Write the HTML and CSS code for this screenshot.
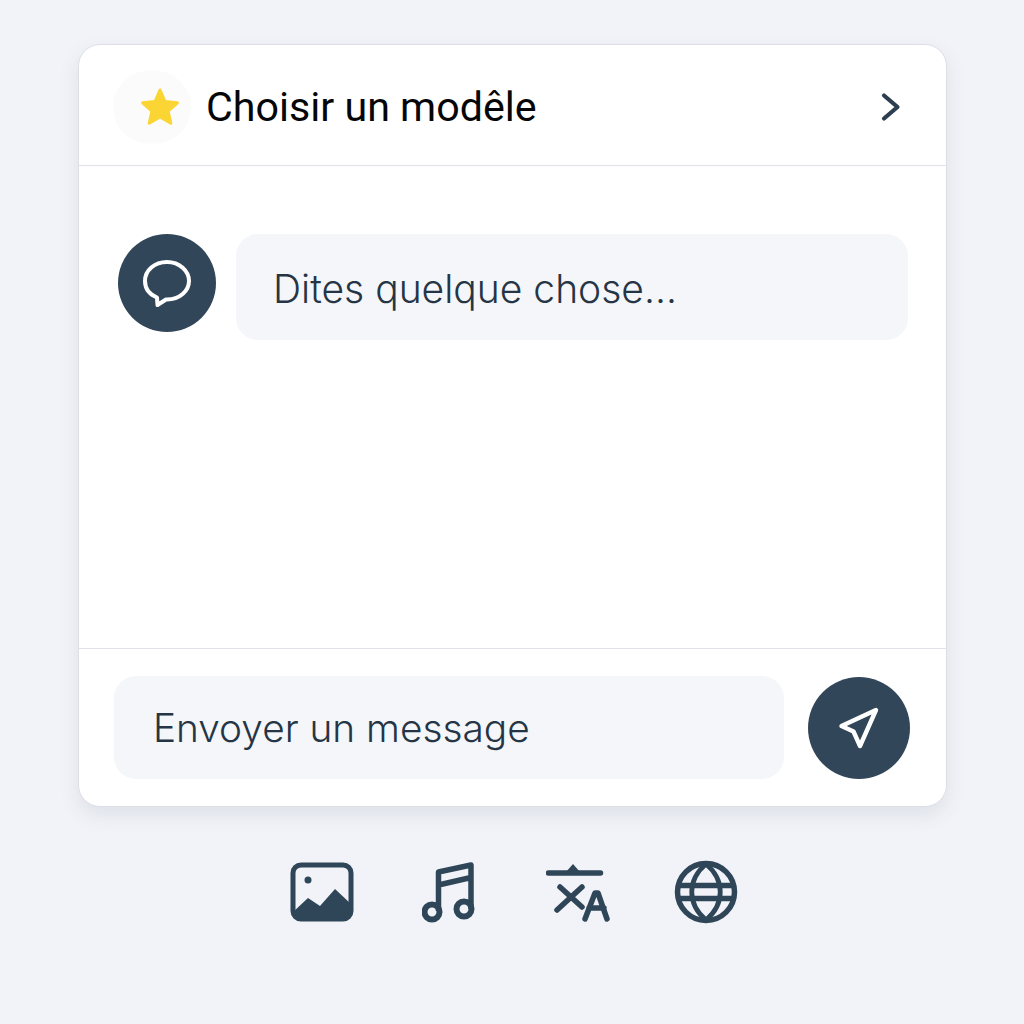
FILE: index.html
```html
<!DOCTYPE html>
<html lang="fr">
<head>
    <meta charset="UTF-8">
    <meta name="viewport" content="width=device-width, initial-scale=1.0">
    <title>Choisir un modèle</title>
    <link rel="stylesheet" href="styles.css">
</head>
<body>
    <div class="card">
        <div class="card-header">
            <div class="star-badge">
                <svg width="40" height="40" viewBox="0 0 40 40"><path d="M20 3l5 11.500 12.400 1.300-9.300 8.300 2.700 12.200L20 29.900 9.200 36.300l2.700-12.200-9.300-8.300L15 14.500z" fill="#fbd533" stroke="#fbd533" stroke-width="3" stroke-linejoin="round"/></svg>
            </div>
            <span class="model-title">Choisir un modêle</span>
            <svg class="chevron" width="22" height="30" viewBox="0 0 22 30"><path d="M4 3.500L17.500 15 4 26.500" fill="none" stroke="#2c3e50" stroke-width="4.200" stroke-linecap="round" stroke-linejoin="round"/></svg>
        </div>

        <div class="card-body">
            <div class="avatar">
                <svg class="avatar-icon" width="50" height="50" viewBox="0 0 50 50"><path d="M25 3C12.500 3 3 11.500 3 22c0 7.500 4.800 13.500 12 16.500l.500 7.500 8.500-5.500c.4 0 .7 0 1 0 12.500 0 22-8.500 22-18.500S37.500 3 25 3z" fill="none" stroke="#fff" stroke-width="4" stroke-linejoin="round"/></svg>
            </div>
            <div class="bubble">Dites quelque chose...</div>
        </div>

        <div class="card-footer">
            <div class="message-input">Envoyer un message</div>
            <div class="send-btn">
                <svg width="44" height="44" viewBox="0 0 44 44"><path d="M39 4L4.500 20l12 5.500L23 40z" fill="none" stroke="#fff" stroke-width="4.400" stroke-linejoin="round"/></svg>
            </div>
        </div>
    </div>

    <div class="tools">
        <svg class="tool-image" width="64" height="60" viewBox="0 0 64 60">
            <rect x="3" y="3" width="58" height="54" rx="8" fill="none" stroke="#2f4558" stroke-width="5"/>
            <circle cx="18" cy="18" r="3.500" fill="#2f4558"/>
            <path d="M3 50l15-14 12 8 15-17 16 15v11a8 8 0 0 1-8 5H11a8 8 0 0 1-8-5z" fill="#2f4558"/>
        </svg>
        <svg class="tool-music" width="54" height="62" viewBox="0 0 54 62">
            <circle cx="10" cy="51" r="7.500" fill="none" stroke="#2f4558" stroke-width="6"/>
            <circle cx="42" cy="48" r="7.500" fill="none" stroke="#2f4558" stroke-width="6"/>
            <path d="M16.500 50V11L49 4v44M16.500 24L49 16.500" fill="none" stroke="#2f4558" stroke-width="5.500" stroke-linejoin="round"/>
        </svg>
        <svg class="tool-translate" width="64" height="62" viewBox="0 0 64 62">
            <path d="M2.500 12h52" stroke="#2f4558" stroke-width="5.500" stroke-linecap="round"/>
            <path d="M20 11l7-8 7 8z" fill="#2f4558"/>
            <path d="M11 49L36 26M14 26l22 20" stroke="#2f4558" stroke-width="5.500" stroke-linecap="round" fill="none"/>
            <path d="M39 58l10-26h3l9 26M43 47h15" stroke="#2f4558" stroke-width="5.500" stroke-linecap="round" stroke-linejoin="round" fill="none"/>
        </svg>
        <svg class="tool-globe" width="64" height="64" viewBox="0 0 64 64">
            <circle cx="32" cy="32" r="28.500" fill="none" stroke="#2f4558" stroke-width="5.500"/>
            <path d="M32 4C13 20 13 44 32 60 51 44 51 20 32 4z" fill="none" stroke="#2f4558" stroke-width="4.800" stroke-linejoin="round"/>
            <path d="M4 25.500h56M4 38.500h56" stroke="#2f4558" stroke-width="5.500"/>
        </svg>
    </div>
</body>
</html>
```

FILE: styles.css
```css
* {
    box-sizing: border-box;
}
body {
    margin: 0;
    min-height: 1024px;
    background-color: #f1f3f8;
    font-family: Inter, "Noto Sans", sans-serif;
}
.card {
    width: 869px;
    height: 763px;
    margin: 44px 0 0 78px;
    display: flex;
    flex-direction: column;
    background-color: #fff;
    border-radius: 22px;
    border: 1px solid #dcdfe6;
    box-shadow: 0 8px 20px rgba(60, 70, 90, 0.1);
}
.card-header {
    height: 121px;
    flex: none;
    display: flex;
    align-items: center;
    padding: 0 44px 0 34px;
    border-bottom: 1px solid #dfe2e8;
}
.star-badge {
    width: 78px;
    height: 74px;
    margin-top: 4px;
    display: flex;
    align-items: center;
    padding-left: 27px;
    border-radius: 50%;
    background-color: #fbfbfb;
}
.model-title {
    margin-left: 15px;
    margin-top: 3px;
    font-family: Roboto, sans-serif;
    font-size: 41.2px;
    font-weight: 400;
    color: #050608;
}
.chevron {
    margin-left: auto;
    margin-top: 3px;
}
.card-body {
    flex: 1;
    display: flex;
    align-items: flex-start;
    gap: 20px;
    padding: 68px 38px 0 39px;
}
.avatar {
    width: 98px;
    height: 98px;
    flex: none;
    display: flex;
    align-items: center;
    justify-content: center;
    border-radius: 50%;
    background-color: #324659;
}
.avatar-icon {
    margin-top: 2px;
}
.bubble {
    flex: 1;
    height: 106px;
    display: flex;
    align-items: center;
    padding: 2px 37px 0;
    border-radius: 22px;
    background-color: #f5f6f9;
    font-size: 39px;
    font-weight: 300;
    color: #253545;
}
.card-footer {
    height: 158px;
    flex: none;
    display: flex;
    align-items: center;
    gap: 24px;
    padding: 0 36px 0 35px;
    border-top: 1px solid #dfe2e8;
}
.message-input {
    flex: 1;
    height: 103px;
    display: flex;
    align-items: center;
    padding: 0 39px;
    border-radius: 22px;
    background-color: #f4f6f9;
    font-size: 38.8px;
    font-weight: 300;
    color: #253545;
}
.send-btn {
    width: 102px;
    height: 102px;
    flex: none;
    display: flex;
    align-items: center;
    justify-content: center;
    border-radius: 50%;
    background-color: #324659;
}
.tools {
    margin: 53px 0 0 290px;
    display: flex;
    align-items: center;
}
.tool-music {
    margin-left: 68px;
}
.tool-translate {
    margin-left: 70px;
}
.tool-globe {
    margin-left: 64px;
}
```
